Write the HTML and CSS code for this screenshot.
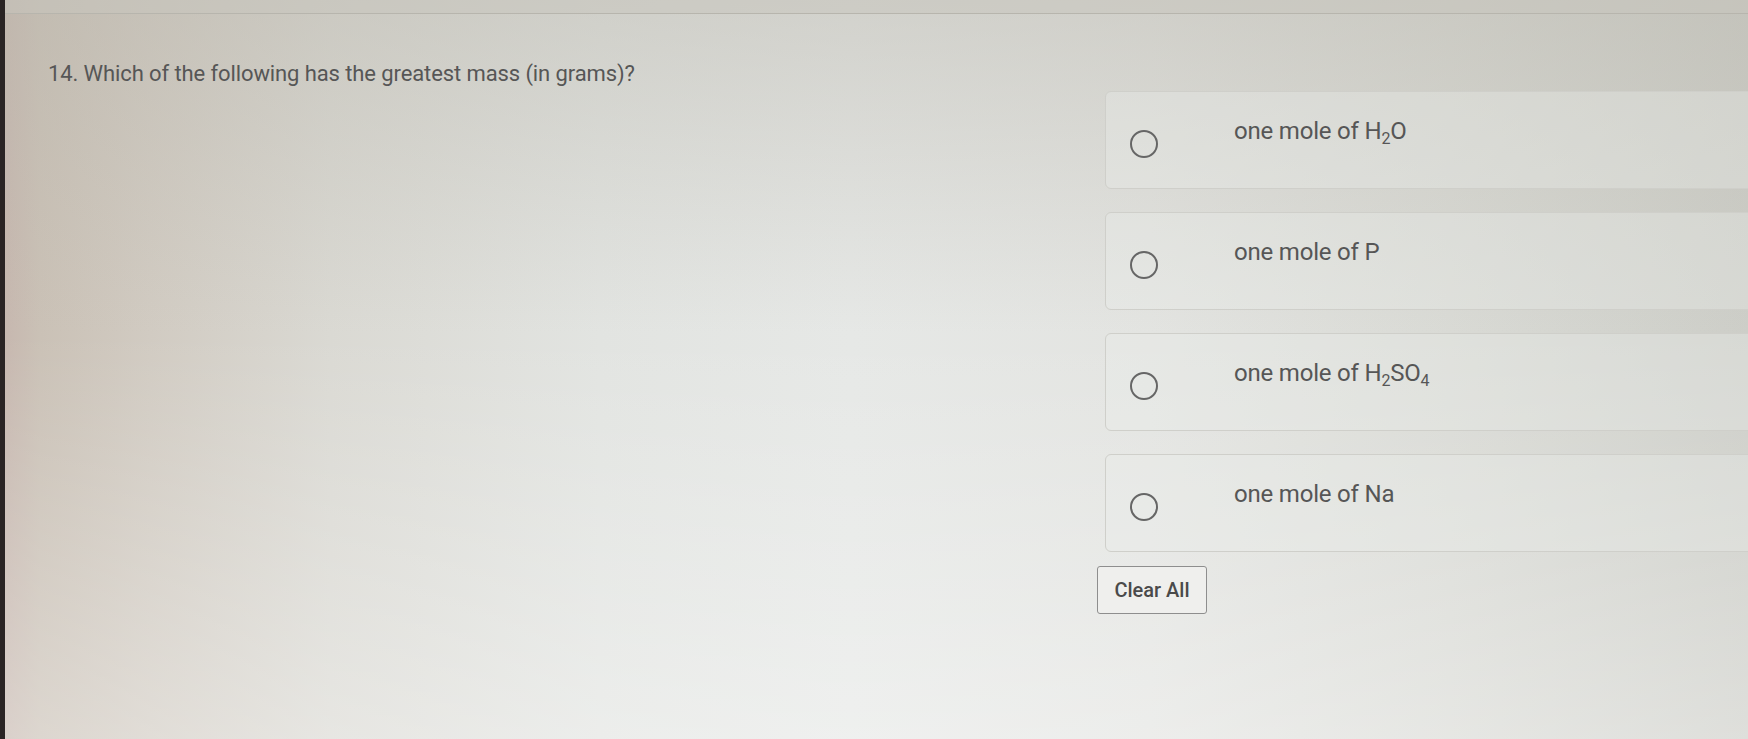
FILE: index.html
```html
<!DOCTYPE html>
<html lang="en">
<head>
    <meta charset="UTF-8">
    <meta name="viewport" content="width=device-width, initial-scale=1.0">
    <title>Question 14</title>
    <link rel="stylesheet" href="styles.css">
</head>
<body>

    <div class="topbar"></div>

    <main class="quiz">
        <p class="question">14. Which of the following has the greatest mass (in grams)?</p>

        <div class="answers">
            <label class="choice">
                <input type="radio" name="q14">
                <span class="dot"></span>
                <span class="text">one mole of H<sub>2</sub>O</span>
            </label>
            <label class="choice">
                <input type="radio" name="q14">
                <span class="dot"></span>
                <span class="text">one mole of P</span>
            </label>
            <label class="choice">
                <input type="radio" name="q14">
                <span class="dot"></span>
                <span class="text">one mole of H<sub>2</sub>SO<sub>4</sub></span>
            </label>
            <label class="choice">
                <input type="radio" name="q14">
                <span class="dot"></span>
                <span class="text">one mole of Na</span>
            </label>

            <button type="button" class="clear" onclick="clearAll()">Clear All</button>
        </div>
    </main>

    <script>
        function clearAll() {
            document.querySelectorAll('input[name="q14"]').forEach(r => r.checked = false);
        }
    </script>

</body>
</html>
```

FILE: styles.css
```css
html, body {
    height: 100%;
}

body {
    margin: 0;
    overflow: hidden;
    font-family: Roboto, "Liberation Sans", Arial, sans-serif;
    color: #565656;
    border-left: 5px solid #2a2424;
    background:
        linear-gradient(180deg, rgba(185, 182, 172, 0.45) 0%, rgba(255, 255, 255, 0) 45%, rgba(255, 255, 255, 0.35) 100%),
        linear-gradient(90deg, #c6b6ae 0px, #cac1b6 40px, #d1cbc2 150px, #dad9d3 330px, #e2e4e1 600px, #e6e8e6 850px, #e3e4e1 1150px, #d9dad5 1450px, #cdcec8 1748px);
}

.topbar {
    height: 13px;
    border-bottom: 1px solid #b7b5ad;
    background: rgba(200, 198, 190, 0.5);
}

.quiz {
    padding: 0 0 0 43px;
}

.question {
    margin: 47px 0 0;
    font-size: 22px;
    letter-spacing: -0.1px;
}

.answers {
    display: flex;
    flex-direction: column;
    align-items: flex-start;
    gap: 23px;
    margin: 5px -20px 0 1057px;
}

.choice {
    position: relative;
    box-sizing: border-box;
    width: 100%;
    height: 98px;
    display: flex;
    align-items: center;
    padding-left: 24px;
    border: 1px solid #cfcfca;
    border-radius: 6px;
    background: rgba(236, 237, 234, 0.35);
    cursor: pointer;
}

.choice input {
    position: absolute;
    opacity: 0;
}

.dot {
    box-sizing: border-box;
    width: 28px;
    height: 28px;
    border: 2px solid #666;
    border-radius: 50%;
    margin-top: 8px;
}

.choice input:checked + .dot {
    box-shadow: inset 0 0 0 5px #eee, inset 0 0 0 14px #555;
}

.text {
    margin-left: 76px;
    margin-bottom: 18px;
    font-size: 24px;
    letter-spacing: -0.2px;
}

.text sub {
    font-size: 16px;
    vertical-align: -5px;
    line-height: 0;
}

.clear {
    margin-top: -9px;
    margin-left: -8px;
    width: 110px;
    height: 48px;
    font-family: Roboto, "Liberation Sans", Arial, sans-serif;
    font-size: 20px;
    font-weight: 500;
    color: #4a4a4a;
    background: #efefed;
    border: 1.5px solid #8e8e8e;
    border-radius: 3px;
    cursor: pointer;
}

.clear:hover {
    background: #e4e4e2;
}
```
